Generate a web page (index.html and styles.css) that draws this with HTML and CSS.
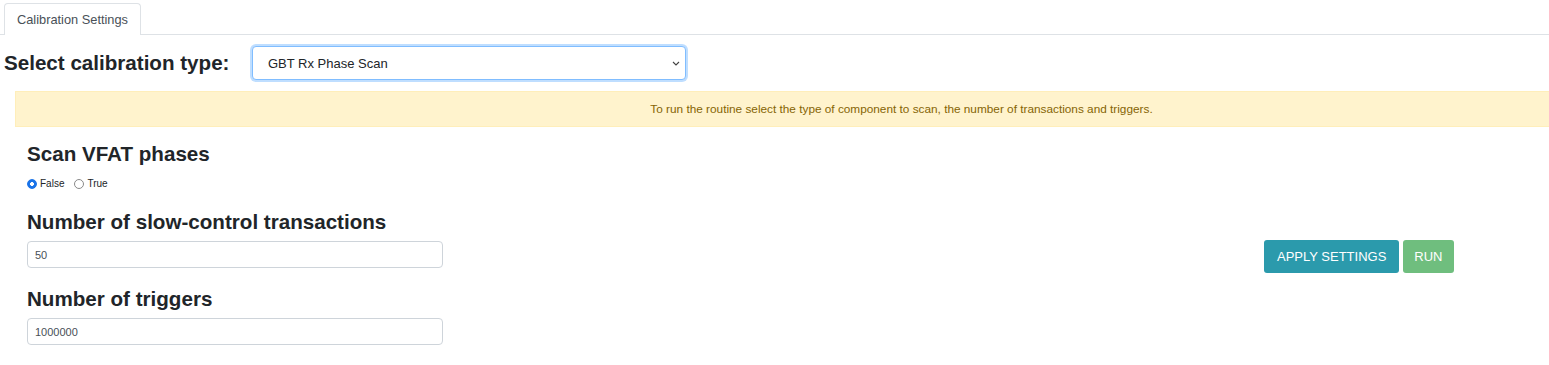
FILE: index.html
```html
<!DOCTYPE html>
<html lang="en">
<head>
    <meta charset="UTF-8">
    <meta name="viewport" content="width=device-width, initial-scale=1.0">
    <title>Calibration</title>
    <link rel="stylesheet" href="styles.css">
</head>
<body>
    <div class="tabs">
        <div class="tab active">Calibration Settings</div>
    </div>

    <div class="type-row">
        <label class="type-label" for="calType">Select calibration type:</label>
        <select id="calType" class="type-select">
            <option>GBT Rx Phase Scan</option>
            <option>S-curve Scan</option>
            <option>Latency Scan</option>
        </select>
    </div>

    <div class="alert">To run the routine select the type of component to scan, the number of transactions and triggers.</div>

    <div class="settings">
        <div class="fields">
            <h4 class="field-title">Scan VFAT phases</h4>
            <div class="radios">
                <label class="radio"><input type="radio" name="vfat" checked> False</label>
                <label class="radio"><input type="radio" name="vfat"> True</label>
            </div>

            <h4 class="field-title">Number of slow-control transactions</h4>
            <input class="text-input" type="text" value="50">

            <h4 class="field-title">Number of triggers</h4>
            <input class="text-input" type="text" value="1000000">
        </div>

        <div class="actions">
            <button class="btn btn-info">APPLY SETTINGS</button>
            <button class="btn btn-success" disabled>RUN</button>
        </div>
    </div>
</body>
</html>
```

FILE: styles.css
```css
body {
    margin: 0;
    font-family: "Liberation Sans", Arial, sans-serif;
    color: #212529;
    background: #fff;
}
.tabs {
    display: flex;
    padding: 3px 0 0 4px;
    border-bottom: 1px solid #dee2e6;
}
.tab {
    font-size: 12.8px;
    color: #495057;
    padding: 0 12px;
    height: 31px;
    line-height: 32px;
    border: 1px solid #dee2e6;
    border-bottom: none;
    border-radius: 4px 4px 0 0;
    margin-bottom: -1px;
    background: #fff;
}
.type-row {
    display: flex;
    align-items: center;
    padding: 11px 0 0 4px;
    height: 34px;
}
.type-label {
    font-size: 20.6px;
    font-weight: 700;
    width: 248px;
}
.type-select {
    appearance: none;
    -webkit-appearance: none;
    width: 434px;
    height: 34px;
    padding: 0 15px;
    font-family: inherit;
    font-size: 13px;
    color: #212529;
    background: #fff url("data:image/svg+xml;utf8,<svg xmlns='http://www.w3.org/2000/svg' width='8' height='5' viewBox='0 0 8 5'><path d='M1 1l3 3 3-3' fill='none' stroke='%23444' stroke-width='1.1'/></svg>") no-repeat right 5px center;
    border: 1px solid #80bdff;
    border-radius: 4px;
    box-shadow: 0 0 0 2px rgba(0, 123, 255, 0.25);
    outline: none;
}
.alert {
    margin: 11px 0 0 15px;
    padding-left: 238px;
    height: 34px;
    line-height: 35px;
    background: #fff3cd;
    border: 1px solid #ffeeba;
    border-right: none;
    color: #856404;
    font-size: 11.8px;
    text-align: center;
}
.settings {
    display: flex;
    padding-left: 27px;
}
.fields {
    width: 416px;
    display: flex;
    flex-direction: column;
}
.field-title {
    margin: 19px 0 0;
    font-size: 20.6px;
    font-weight: 700;
    line-height: 24px;
}
.fields .field-title:first-child {
    margin-top: 15px;
}
.field-title + .text-input {
    margin-top: 7px;
}
.radios {
    display: flex;
    gap: 10px;
    margin: 12px 0 2px;
    font-size: 10px;
}
.radio {
    display: flex;
    align-items: center;
    gap: 3px;
}
.radio input {
    appearance: none;
    -webkit-appearance: none;
    margin: 0;
    width: 10px;
    height: 10px;
    border: 1px solid #8a8a8a;
    border-radius: 50%;
    background: #fff;
}
.radio input:checked {
    border-color: #1a73e8;
    background: radial-gradient(circle, #fff 0 1.6px, #1a73e8 2.2px);
}
.text-input {
    box-sizing: border-box;
    width: 416px;
    height: 27px;
    padding: 0 7px;
    font-family: inherit;
    font-size: 11px;
    color: #495057;
    border: 1px solid #ced4da;
    border-radius: 4px;
}
.actions {
    display: flex;
    gap: 4px;
    margin: 113px 0 0 821px;
    align-self: flex-start;
}
.btn {
    height: 33px;
    padding: 0 13px;
    border: none;
    border-radius: 3px;
    color: #fff;
    font-family: inherit;
    font-size: 13px;
    cursor: pointer;
}
.btn-info {
    background: #2b9aac;
}
.btn-success {
    padding: 0 11px;
    background: #6fbe7e;
}
```
